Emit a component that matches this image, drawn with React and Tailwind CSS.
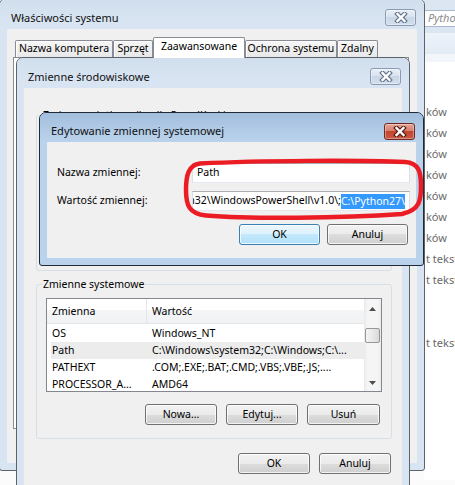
import React from 'react';

function XGlyph({ outline }) {
  return (
    <svg width="14" height="11" viewBox="0 0 14 11">
      <path d="M3.5 2 L10.5 9 M10.5 2 L3.5 9" stroke={outline} strokeWidth="4.6" strokeLinecap="square" fill="none" />
      <path d="M3.5 2 L10.5 9 M10.5 2 L3.5 9" stroke="#ffffff" strokeWidth="2.4" strokeLinecap="square" fill="none" />
    </svg>
  );
}

function CloseBtn({ active }) {
  return (
    <div
      className={
        'w-[31px] h-[17px] rounded-[3px] border flex items-center justify-center shadow-[inset_0_0_0_1px_rgba(255,255,255,0.35)] ' +
        (active
          ? 'border-[#6b2a22] bg-[linear-gradient(#e6a497,#d77f6c_45%,#c4452f_50%,#c95a44)]'
          : 'border-[#8b9bb3] bg-[linear-gradient(#e9eff7,#d9e3ef_45%,#c9d6e6_50%,#d3dfec)]')
      }
    >
      <XGlyph outline={active ? '#5a1d14' : '#66768e'} />
    </div>
  );
}

function Win({ className, title, active, titleBar, children }) {
  return (
    <div
      className={
        'absolute flex flex-col border rounded-t-[7px] rounded-b-[3px] overflow-hidden ' +
        (active ? 'border-[#1f2a36] bg-[#bad2eb]' : 'border-[#5d636b] bg-[#d8e4f1]') +
        ' ' +
        className
      }
    >
      <div
        className={
          'flex items-center justify-between pl-[11px] pr-[8px] shrink-0 ' +
          titleBar +
          ' ' +
          (active ? 'bg-[linear-gradient(#a2bedd,#b4cde8_70%,#bad2eb)]' : 'bg-[linear-gradient(#d0deed,#d8e4f1_70%,#d8e4f1)]')
        }
      >
        <span className="text-[11px] leading-[16px] text-[#111]">{title}</span>
        <CloseBtn active={active} />
      </div>
      <div className="flex-1 mx-[7px] mb-[7px] bg-[#f0f0f0] flex flex-col min-h-0">{children}</div>
    </div>
  );
}

function Btn({ children, w, def }) {
  return (
    <div
      className={
        'h-[21px] border rounded-[3px] shadow-[inset_0_0_0_1px_rgba(255,255,255,0.75)] flex items-center justify-center text-black shrink-0 ' +
        (def
          ? 'border-[#3c7fb1] bg-[linear-gradient(#ecf7fd,#dcf1fc_50%,#c4e8fc_50%,#b1e0f9)] '
          : 'border-[#707070] bg-[linear-gradient(#f2f2f2,#ebebeb_50%,#dddddd_50%,#cfcfcf)] ') +
        w
      }
    >
      {children}
    </div>
  );
}

function Tab({ children, w, sel }) {
  if (sel) {
    return (
      <div
        className={
          'h-[21px] -mb-px relative z-10 bg-white border border-b-0 border-[#898c95] rounded-t-[2px] flex items-center justify-center pb-[3px] whitespace-nowrap ' +
          w
        }
      >
        {children}
      </div>
    );
  }
  return (
    <div
      className={
        'h-[17px] border border-b-0 border-[#898c95] rounded-t-[2px] bg-[linear-gradient(#f6f6f6,#e8e8e8)] shadow-[inset_1px_1px_0_#ffffff] flex items-center justify-center whitespace-nowrap ' +
        w
      }
    >
      {children}
    </div>
  );
}

const rows = [
  ['OS', 'Windows_NT', false],
  ['Path', 'C:\\Windows\\system32;C:\\Windows;C:\\...', true],
  ['PATHEXT', '.COM;.EXE;.BAT;.CMD;.VBS;.VBE;.JS;....', false],
  ['PROCESSOR_A...', 'AMD64', false],
];

const bgRows = ['ków', 'ków', 'ków', 'ków', 'ków', 'ków', 'ków', 't tekst', 't tekst', '', '', 't tekst', '', '', '', '', '', ''];

export default function App() {
  return (
    <div className="relative w-[455px] h-[485px] overflow-hidden bg-white font-['Segoe_UI','Noto_Sans',sans-serif] text-[10.5px] text-black">
      {/* background application */}
      <div className="absolute inset-0 bg-[#fbfbfb]">
        <div className="ml-[424px] flex flex-col">
          <div className="h-[10px] bg-[#dbe6f2]" />
          <div className="h-[17px] bg-white border border-r-0 border-[#a9b8cb] flex items-center pl-[3px] italic text-[11px] text-[#8b8b8b] whitespace-nowrap">
            Pytho
          </div>
          <div className="h-[6px] bg-[#dbe6f2]" />
          <div className="h-[21px] bg-[linear-gradient(#eef3fa,#e3ebf5)]" />
          <div className="h-[8px] bg-[#f2f6fb]" />
          <div className="h-[40px] bg-white" />
          <div className="flex flex-col bg-white">
            {bgRows.map((t, i) => (
              <div key={i} className="h-[21px] flex items-center pl-[2px] text-[11px] text-[#6a6a6a] whitespace-nowrap">
                {t}
              </div>
            ))}
          </div>
        </div>
      </div>

      {/* Window 1 */}
      <Win className="left-[-1px] top-[-2px] w-[426px] h-[473px]" title="Właściwości systemu" titleBar="h-[30px] pt-[7px]">
        <div className="pl-[6px] pt-[7px] flex flex-col">
          <div className="flex items-end h-[21px] ml-[2px]">
            <Tab w="w-[98px]">Nazwa komputera</Tab>
            <Tab w="w-[40px]">Sprzęt</Tab>
            <Tab w="w-[92px]" sel>
              Zaawansowane
            </Tab>
            <Tab w="w-[92px]">Ochrona systemu</Tab>
            <Tab w="w-[41px]">Zdalny</Tab>
          </div>
          <div className="w-[396px] h-[372px] border border-[#898c95] bg-white" />
        </div>
      </Win>

      {/* Window 2 */}
      <Win className="left-[16px] top-[57px] w-[394px] h-[450px]" title="Zmienne środowiskowe" titleBar="h-[30px] pt-[7px]">
        <div className="pl-[12px] flex flex-col">
          <fieldset className="mt-[19px] w-[356px] h-[164px] border border-[#d5dfe5] rounded-[3px]">
            <legend className="ml-[5px] px-[1px] leading-[16px]">Zmienne użytkownika dla PawełKacki</legend>
          </fieldset>
          <fieldset className="mt-[5px] w-[356px] h-[163px] border border-[#d5dfe5] rounded-[3px]">
            <legend className="ml-[5px] px-[1px] leading-[16px]">Zmienne systemowe</legend>
            <div className="ml-[9px] mt-[6px] w-[336px] h-[94px] border border-[#828790] bg-white flex">
              <div className="flex-1 flex flex-col overflow-hidden">
                <div className="h-[25px] shrink-0 flex border-b border-[#e3e5e8] bg-[linear-gradient(#ffffff,#ffffff_45%,#f4f5f7_45%,#f1f2f4)]">
                  <div className="w-[100px] pl-[5px] pt-[2px] border-r border-[#e3e5e8] flex items-center">Zmienna</div>
                  <div className="pl-[5px] pt-[2px] flex items-center">Wartość</div>
                </div>
                <div className="pt-[1px] flex flex-col">
                  {rows.map(([a, b, sel]) => (
                    <div key={a} className={'ml-[4px] h-[17px] shrink-0 flex items-center whitespace-nowrap ' + (sel ? 'bg-[#ececec]' : '')}>
                      <div className="w-[100px] pl-[1px]">{a}</div>
                      <div className="pl-[1px]">{b}</div>
                    </div>
                  ))}
                </div>
              </div>
              <div className="w-[17px] shrink-0 flex flex-col bg-[linear-gradient(90deg,#e9e9e9,#f5f5f5_20%,#f5f5f5_80%,#ececec)]">
                <div className="h-[17px] flex items-center justify-center pt-[3px]">
                  <svg width="7" height="4" viewBox="0 0 7 4">
                    <path d="M0 4 L3.5 0 L7 4 Z" fill="#4d4d4d" />
                  </svg>
                </div>
                <div className="mt-[12px] mx-[1px] h-[15px] border border-[#979797] rounded-[2px] bg-[linear-gradient(90deg,#f4f4f4,#e9e9e9_50%,#d9d9d9)]" />
                <div className="flex-1" />
                <div className="h-[17px] flex items-center justify-center">
                  <svg width="7" height="4" viewBox="0 0 7 4">
                    <path d="M0 0 L7 0 L3.5 4 Z" fill="#4d4d4d" />
                  </svg>
                </div>
              </div>
            </div>
            <div className="ml-[9px] mt-[12px] w-[336px] flex justify-end gap-[9px] pr-[2px]">
              <Btn w="w-[72px]">Nowa...</Btn>
              <Btn w="w-[72px]">Edytuj...</Btn>
              <Btn w="w-[73px]">Usuń</Btn>
            </div>
          </fieldset>
          <div className="mt-[14px] w-[355px] flex justify-end gap-[9px]">
            <Btn w="w-[72px]">OK</Btn>
            <Btn w="w-[72px]">Anuluj</Btn>
          </div>
        </div>
      </Win>

      {/* Window 3 */}
      <Win className="left-[39px] top-[112px] w-[385px] h-[154px]" title="Edytowanie zmiennej systemowej" active titleBar="h-[29px] pt-[7px]">
        <div className="pl-[10px] pt-[21px] flex flex-col">
          <div className="flex items-center h-[20px]">
            <div className="w-[135px]">Nazwa zmiennej:</div>
            <div className="w-[218px] h-[20px] bg-white border border-[#dbdfe6] border-t-[#abadb3] border-b-[#e3e9ef] flex items-center pl-[4px]">
              Path
            </div>
          </div>
          <div className="flex items-center h-[20px] mt-[8px]">
            <div className="w-[135px]">Wartość zmiennej:</div>
            <div className="w-[218px] h-[20px] bg-white border border-[#dbdfe6] border-t-[#abadb3] border-b-[#e3e9ef] flex items-center justify-end pr-[4px] overflow-hidden whitespace-nowrap">
              <span className="shrink-0">%SystemRoot%\system32\WindowsPowerShell\v1.0\;</span>
              <span className="shrink-0 bg-[#3399ff] text-white leading-[15px]">C:\Python27\</span>
            </div>
          </div>
          <div className="mt-[13px] w-[351px] flex justify-end gap-[7px]">
            <Btn w="w-[81px]" def>
              OK
            </Btn>
            <Btn w="w-[81px]">Anuluj</Btn>
          </div>
        </div>
      </Win>

      {/* red hand-drawn mark */}
      <svg className="absolute left-0 top-0 pointer-events-none" width="455" height="485" viewBox="0 0 455 485">
        <path
          d="M200 163.5 C260 160.5 360 160 405 162 C419 163 421 172 421 186 C421 200 420 210 402 214 C340 218.5 250 219 206 215.5 C189 214 186 205 186 190 C186 176 188 165 200 163.5 Z"
          fill="none"
          stroke="#ec1c24"
          strokeWidth="4.5"
        />
      </svg>
    </div>
  );
}
